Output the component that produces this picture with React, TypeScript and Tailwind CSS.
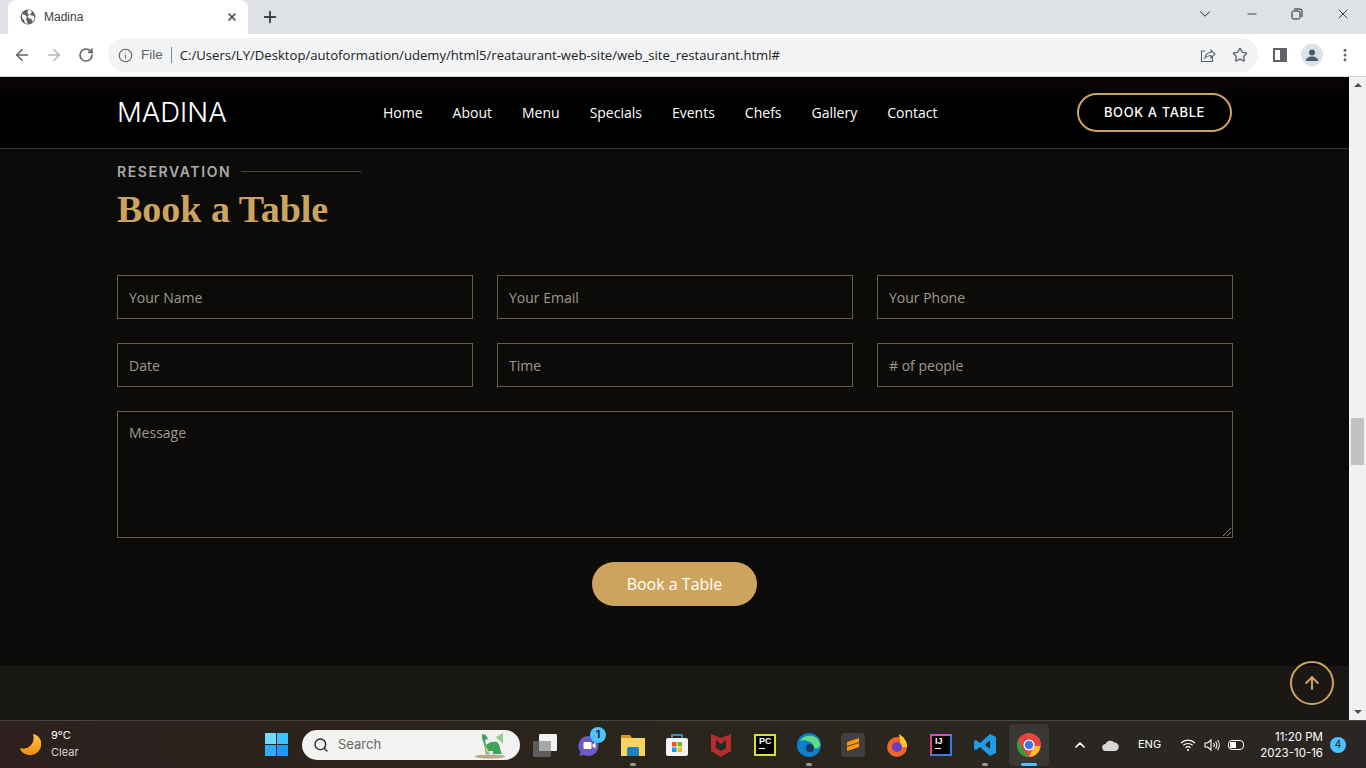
import type { ReactNode } from 'react';
import { ArrowLeft, ArrowRight, ArrowUp, ChevronDown, ChevronUp, Info, Minus, MoreVertical, Plus, RotateCw, Search, Star, X } from 'lucide-react';

const navLinks = ['Home', 'About', 'Menu', 'Specials', 'Events', 'Chefs', 'Gallery', 'Contact'];

const openSans = "font-['Open_Sans',sans-serif]";

const Field = ({ label }: { label: string }) => (
  <div className={`flex h-11 items-center border border-[#665e4d] pl-[11px] pr-3 pt-[2px] text-sm text-[#a0998a] ${openSans}`}>
    {label}
  </div>
);

const Globe = () => (
  <svg width="16" height="16" viewBox="0 0 16 16">
    <circle cx="8" cy="8" r="7.5" fill="#5f6368" />
    <path d="M2 5l3 1 2 2-1 2 1 3 1 2-3-1-1-3-2-2zM8 1l3 .5 1 2-2 1.5 1 1.500 3 .5.500 3-2 3-1-3-3-1-1-2 2-1-2-2z" fill="#fff" />
  </svg>
);

const TabBar = () => (
  <div className="flex h-[34px] items-end bg-[#dee1e6] pl-2">
    <div className="flex h-[34px] w-[240px] items-center rounded-t-lg bg-white pl-3 pr-[10px]">
      <Globe />
      <span className="ml-2 flex-1 font-['Liberation_Sans',sans-serif] text-xs text-[#3c4043]">Madina</span>
      <X size={12} strokeWidth={3.2} className="text-[#45484c]" />
    </div>
    <Plus size={18} strokeWidth={2.5} className="mb-[8px] ml-[13px] text-[#3c4043]" />
    <div className="mb-[11px] ml-auto flex items-center text-[#202124]">
      <ChevronDown size={18} strokeWidth={1.3} className="mr-[31px]" />
      <Minus size={14} strokeWidth={1.4} className="mr-[32px]" />
      <svg width="12" height="12" viewBox="0 0 12 12" fill="none" stroke="#202124" className="mr-[32px]">
        <rect x="1" y="3" width="8" height="8" rx="1.500" />
        <path d="M3 1h6a2 2 0 0 1 2 2v6" />
      </svg>
      <X size={16} strokeWidth={1.2} className="mr-[15px]" />
    </div>
  </div>
);

const Toolbar = () => (
  <div className="flex h-[43px] items-center border-b border-[#d4d5d7] bg-white pl-[13px]">
    <ArrowLeft size={18} strokeWidth={2.2} className="text-[#5f6368]" />
    <ArrowRight size={18} strokeWidth={2.2} className="ml-[14px] text-[#b4b7bb]" />
    <RotateCw size={16} strokeWidth={2.4} className="ml-[15px] text-[#5f6368]" />
    <div className="ml-[14px] flex h-[34px] w-[1150px] items-center rounded-full bg-[#f1f3f4] pl-[10px] font-['Liberation_Sans',sans-serif] text-[13.5px]">
      <Info size={15} strokeWidth={1.8} className="text-[#5f6368]" />
      <span className="ml-[8px] text-[#5f6368]">File</span>
      <span className="ml-[8px] h-[16px] w-px bg-[#80868b]" />
      <span className={`ml-[8px] pt-[2px] text-[13.12px] text-[#202124] ${openSans}`}>C:/Users/LY/Desktop/autoformation/udemy/html5/reataurant-web-site/web_site_restaurant.html#</span>
      <svg width="16" height="16" viewBox="0 0 16 16" fill="none" stroke="#5f6368" strokeWidth="1.100" className="ml-auto">
        <path d="M5 4H1.500v10.500h11V10" />
        <path d="M5 11c.5-3.500 3-5.500 6-5.500V3l4 4-4 4V8.500c-2.500 0-4.500.8-6 2.500z" />
      </svg>
      <Star size={16} strokeWidth={2} className="ml-[16px] mr-[10px] text-[#5f6368]" />
    </div>
    <div className="ml-[15px] flex h-[14px] w-[14px] justify-end border-2 border-[#5f6368] bg-white">
      <div className="h-full w-[5px] bg-[#5f6368]" />
    </div>
    <div className="ml-[14px] flex h-[22px] w-[22px] items-center justify-center rounded-full bg-[#dee1e6]">
      <svg width="14" height="14" viewBox="0 0 14 14" fill="#4e5a75">
        <circle cx="7" cy="4.500" r="3" />
        <path d="M1 13c0-3 2.500-4.500 6-4.500s6 1.500 6 4.500z" />
      </svg>
    </div>
    <MoreVertical size={16} strokeWidth={2.5} className="ml-[14px] text-[#5f6368]" />
  </div>
);

const Header = () => (
  <header className="flex h-[72px] items-center border-b border-[#37332a] bg-[linear-gradient(#0a0505,#000_40%)] px-[117px]">
    <span className="w-[266px] font-['Inter',sans-serif] text-[27.5px] font-light text-white">MADINA</span>
    <nav className={`flex gap-[30px] text-sm font-medium text-white ${openSans}`}>
      {navLinks.map((link) => (
        <span key={link}>{link}</span>
      ))}
    </nav>
    <div className="ml-auto flex h-[39px] w-[155px] items-center justify-center rounded-full border-2 border-[#cda45e] font-['Inter',sans-serif] text-[13px] font-medium tracking-[0.6px] text-white">
      BOOK A TABLE
    </div>
  </header>
);

const ReservationForm = () => (
  <section className="flex h-[517px] flex-col bg-[#0c0b09] pl-[117px] pr-[116px] pt-[14px]">
    <div className="flex h-[17px] items-center font-['Inter',sans-serif] text-sm font-semibold tracking-[1.6px] text-[#aaaaaa]">
      RESERVATION
      <span className="ml-[10px] h-px w-[120px] bg-[#4a4740]" />
    </div>
    <h2 className="mt-[7px] h-[44px] font-['Liberation_Serif',serif] text-[38px] font-bold leading-[44px] text-[#cda45e]">Book a Table</h2>
    <div className="mt-[44px] grid grid-cols-3 gap-x-6 gap-y-6">
      {['Your Name', 'Your Email', 'Your Phone', 'Date', 'Time', '# of people'].map((label) => (
        <Field key={label} label={label} />
      ))}
    </div>
    <div className={`relative mt-6 h-[127px] border border-[#665e4d] pl-[11px] pr-3 pt-[11px] text-sm leading-[19px] text-[#a0998a] ${openSans}`}>
      Message
      <svg width="9" height="9" viewBox="0 0 9 9" className="absolute bottom-px right-px" stroke="#8a8a8a">
        <path d="M1 9l8-8M5 9l4-4" />
      </svg>
    </div>
    <div className={`mr-px mt-6 flex h-11 w-[165px] items-center justify-center self-center rounded-full bg-[#cda45e] text-base text-white ${openSans}`}>
      Book a Table
    </div>
  </section>
);

const Scrollbar = () => (
  <div className="flex w-[17px] flex-col bg-[#f1f1f1]">
    <div className="mx-auto mt-[6px] h-0 w-0 border-x-[4px] border-b-[4px] border-x-transparent border-b-[#505050]" />
    <div className="mx-[2px] mt-[331px] h-[47px] bg-[#c1c1c1]" />
    <div className="mx-auto mb-[6px] mt-auto h-0 w-0 border-x-[4px] border-t-[4px] border-x-transparent border-t-[#505050]" />
  </div>
);

const TaskIcon = ({ children, dot, active }: { children: ReactNode; dot?: boolean; active?: boolean }) => (
  <div className="flex w-11 justify-center">
    <div className={`relative flex h-[42px] w-10 items-center justify-center rounded ${active ? 'bg-[#3a3835]' : ''}`}>
      {children}
      {dot && <span className="absolute bottom-0 h-[3px] w-[6px] rounded-full bg-[#9a9a9a]" />}
      {active && <span className="absolute bottom-0 h-[3px] w-[16px] rounded-full bg-[#4cc2ff]" />}
    </div>
  </div>
);

const TaskIcons = () => (
  <div className="ml-[3px] flex items-center">
    <TaskIcon>
      <svg width="26" height="24" viewBox="0 0 26 24">
        <rect x="1" y="8" width="18" height="16" rx="1" fill="#5d5d5d" />
        <rect x="7" y="1" width="18" height="17" rx="1" fill="#f1f1f1" />
        <rect x="7" y="8" width="12" height="10" fill="#a8a8a8" />
      </svg>
    </TaskIcon>
    <TaskIcon>
      <svg width="24" height="24" viewBox="0 0 24 24">
        <path d="M11 3a10 10 0 1 1-4 19l-5 1 1.500-4A10 10 0 0 1 11 3z" fill="#6a5cc8" />
        <rect x="6.500" y="9" width="8" height="7" rx="1" fill="#fff" />
        <path d="M15.500 11.500l3-2v6l-3-2z" fill="#fff" />
      </svg>
      <span className="absolute right-[3px] top-[3px] flex h-4 w-4 items-center justify-center rounded-full bg-[#4cc2ff] text-[11px] font-semibold text-[#1a1a1a]">1</span>
    </TaskIcon>
    <TaskIcon dot>
      <svg width="24" height="22" viewBox="0 0 24 22">
        <path d="M0 1h9l2 3h13v18H0z" fill="#d99a18" />
        <path d="M0 4h24v18H0z" fill="#fcd35c" />
        <path d="M6 15a2 2 0 0 1 2-2h8a2 2 0 0 1 2 2v7H6z" fill="#1f7fc4" />
      </svg>
    </TaskIcon>
    <TaskIcon>
      <svg width="24" height="24" viewBox="0 0 24 24">
        <path d="M7 6V2h10v4" fill="none" stroke="#37b6e9" strokeWidth="1.500" />
        <rect x="1" y="5" width="22" height="18" rx="2" fill="#f4f4f4" />
        <rect x="7" y="9" width="4.500" height="4.500" fill="#f25022" />
        <rect x="12.500" y="9" width="4.500" height="4.500" fill="#7fba00" />
        <rect x="7" y="14.500" width="4.500" height="4.500" fill="#00a4ef" />
        <rect x="12.500" y="14.500" width="4.500" height="4.500" fill="#ffb900" />
      </svg>
    </TaskIcon>
    <TaskIcon>
      <svg width="22" height="24" viewBox="0 0 22 24">
        <path d="M1 1l10 4 10-4v17l-10 6-10-6z" fill="#b52c2c" />
        <path d="M6 7l5 4 5-4v8l-5 3-5-3z" fill="#2a2620" />
      </svg>
    </TaskIcon>
    <TaskIcon>
      <div className="flex h-[22px] w-[22px] flex-col border-2 border-[#d6e232] bg-black pl-[3px] font-['Liberation_Sans',sans-serif] text-[9px] font-bold leading-[11px] text-white">
        PC
        <span className="mt-px h-px w-[6px] bg-white" />
      </div>
    </TaskIcon>
    <TaskIcon dot>
      <svg width="24" height="24" viewBox="0 0 24 24">
        <circle cx="12" cy="12" r="12" fill="#0f7fc9" />
        <path d="M3 8c3-7 18-8 20 3 1 5-7 6-8 2 3-4-9-7-12-5z" fill="#5fdc84" />
        <circle cx="13" cy="15" r="4" fill="#123a5a" />
      </svg>
    </TaskIcon>
    <TaskIcon>
      <div className="flex h-6 w-6 items-center justify-center rounded-sm bg-[#3f3f3f]">
        <svg width="14" height="16" viewBox="0 0 14 16" fill="#ff9800">
          <path d="M1 5l12-4v4L1 9zM1 10l12-4v4L1 14z" />
        </svg>
      </div>
    </TaskIcon>
    <TaskIcon>
      <svg width="24" height="24" viewBox="0 0 24 24">
        <circle cx="12" cy="14" r="10" fill="#f0632a" />
        <path d="M14 1c5 3 8 7 8 13h-6z" fill="#ffc828" />
        <circle cx="12" cy="14" r="5" fill="#6a3fc7" />
      </svg>
    </TaskIcon>
    <TaskIcon>
      <div className="flex h-[22px] w-[22px] flex-col border-2 border-[#3a7be0] border-l-[#e0457f] border-t-[#d24fd0] bg-black pl-[3px] font-['Liberation_Sans',sans-serif] text-[9px] font-bold leading-[11px] text-white">
        IJ
        <span className="mt-px h-px w-[6px] bg-white" />
      </div>
    </TaskIcon>
    <TaskIcon dot>
      <svg width="24" height="24" viewBox="0 0 24 24">
        <path d="M17 1l6 3v16l-6 3-10-9-4 3-2-1V8l2-1 4 3zM17 7l-5 5 5 4z" fill="#1d9ce5" fillRule="evenodd" />
      </svg>
    </TaskIcon>
    <TaskIcon active>
      <svg width="24" height="24" viewBox="0 0 24 24">
        <circle cx="12" cy="12" r="12" fill="#e8453c" />
        <path d="M1 7l6 11 5 6A12 12 0 0 1 1 7z" fill="#2f9e44" />
        <path d="M12 24l5-11h6.500A12 12 0 0 1 12 24z" fill="#fbc02d" />
        <circle cx="12" cy="12" r="5.500" fill="#fff" />
        <circle cx="12" cy="12" r="4.300" fill="#3b78e7" />
      </svg>
    </TaskIcon>
  </div>
);

const Taskbar = () => (
  <footer className="flex h-12 items-center border-t border-[#4a4541] bg-gradient-to-r from-[#2d201e] via-[#2a261c] to-[#2a2625] font-['Inter',sans-serif] text-[11.5px] text-white">
    <div className="ml-[19px] flex w-[246px] items-center">
      <svg width="23" height="24" viewBox="0 0 23 24">
        <defs>
          <linearGradient id="moon" x1="0" y1="0" x2="0" y2="1">
            <stop offset="0" stopColor="#ffc93c" />
            <stop offset="1" stopColor="#f08a12" />
          </linearGradient>
        </defs>
        <path d="M14 1c6 1 9 6 8 12-1 6-7 10-13 9-4-1-7-3-8-7 8 3 16-5 13-14z" fill="url(#moon)" />
      </svg>
      <div className="mb-px ml-[9px] text-[11px] leading-[17px]">
        <div>9°C</div>
        <div className="text-[#d8d8d8]">Clear</div>
      </div>
    </div>
    <div className="grid h-[23px] w-[23px] grid-cols-2 gap-px">
      <span className="bg-[#6fdcff]" />
      <span className="bg-[#3cc0ff]" />
      <span className="bg-[#2aaeff]" />
      <span className="bg-[#1c9aff]" />
    </div>
    <div className="ml-[14px] flex h-[30px] w-[218px] items-center rounded-full bg-[#f2f2f0] pl-[11px]">
      <Search size={16} strokeWidth={2} className="text-[#222]" />
      <span className="ml-[9px] text-[13px] text-[#666]">Search</span>
      <svg width="32" height="28" viewBox="0 0 32 28" className="ml-auto mr-[14px]">
        <ellipse cx="16" cy="25.500" rx="15" ry="2" fill="#b9a88a" />
        <path d="M22 6l7-4v11z" fill="#8fce8f" />
        <path d="M8 3l4 1 2 4-3 1 1 5c3-3 8-4 11-3 3 2 3 8 5 12H19v-3h-4v3h-3l-2-10-2-6z" fill="#3da35d" />
        <path d="M10 13l3 9h3z" fill="#e2cf7a" />
      </svg>
    </div>
    <TaskIcons />
    <ChevronUp size={16} strokeWidth={2.5} className="ml-[21px]" />
    <svg width="17" height="12" viewBox="0 0 17 12" fill="#d8d8d8" className="ml-[14px]">
      <path d="M4 12a3.500 3.500 0 0 1-.5-7A5 5 0 0 1 12 3.500 4.200 4.200 0 0 1 13 12z" />
    </svg>
    <span className="ml-[19px] w-6 text-[11px]">ENG</span>
    <svg width="16" height="14" viewBox="0 0 16 14" fill="none" stroke="#fff" strokeWidth="1.200" className="ml-[18px]">
      <path d="M1 5a10 10 0 0 1 14 0M3.200 7.400a7 7 0 0 1 9.600 0M5.500 9.800a3.700 3.700 0 0 1 5 0" />
      <circle cx="8" cy="12" r="1" fill="#fff" stroke="none" />
    </svg>
    <svg width="16" height="14" viewBox="0 0 16 14" fill="none" stroke="#fff" strokeWidth="1.100" className="ml-[8px]">
      <path d="M1 5h2.500L7 2v10L3.500 9H1zM9.500 5a3 3 0 0 1 0 4M11.500 3.500a5.500 5.500 0 0 1 0 7M13.500 2a8 8 0 0 1 0 10" />
    </svg>
    <div className="ml-[8px] flex h-[10px] w-[16px] items-center rounded-sm border border-white p-px">
      <span className="h-full w-[6px] bg-white" />
    </div>
    <div className="ml-[13px] w-[66px] text-right leading-[16px]">
      <div>11:20 PM</div>
      <div>2023-10-16</div>
    </div>
    <span className="ml-[7px] flex h-4 w-4 items-center justify-center rounded-full bg-[#4cc2ff] text-[10px] text-[#1a1a1a]">4</span>
  </footer>
);

export default function App() {
  return (
    <div className="flex h-[768px] w-[1366px] flex-col overflow-hidden">
      <TabBar />
      <Toolbar />
      <div className="relative flex h-[643px]">
        <main className="flex w-[1349px] flex-col bg-[#1a1814]">
          <Header />
          <ReservationForm />
        </main>
        <Scrollbar />
        <div className="absolute bottom-[15px] right-[32px] flex h-11 w-11 items-center justify-center rounded-full border-2 border-[#cda45e] text-[#cda45e]">
          <ArrowUp size={20} strokeWidth={2.5} />
        </div>
      </div>
      <Taskbar />
    </div>
  );
}
